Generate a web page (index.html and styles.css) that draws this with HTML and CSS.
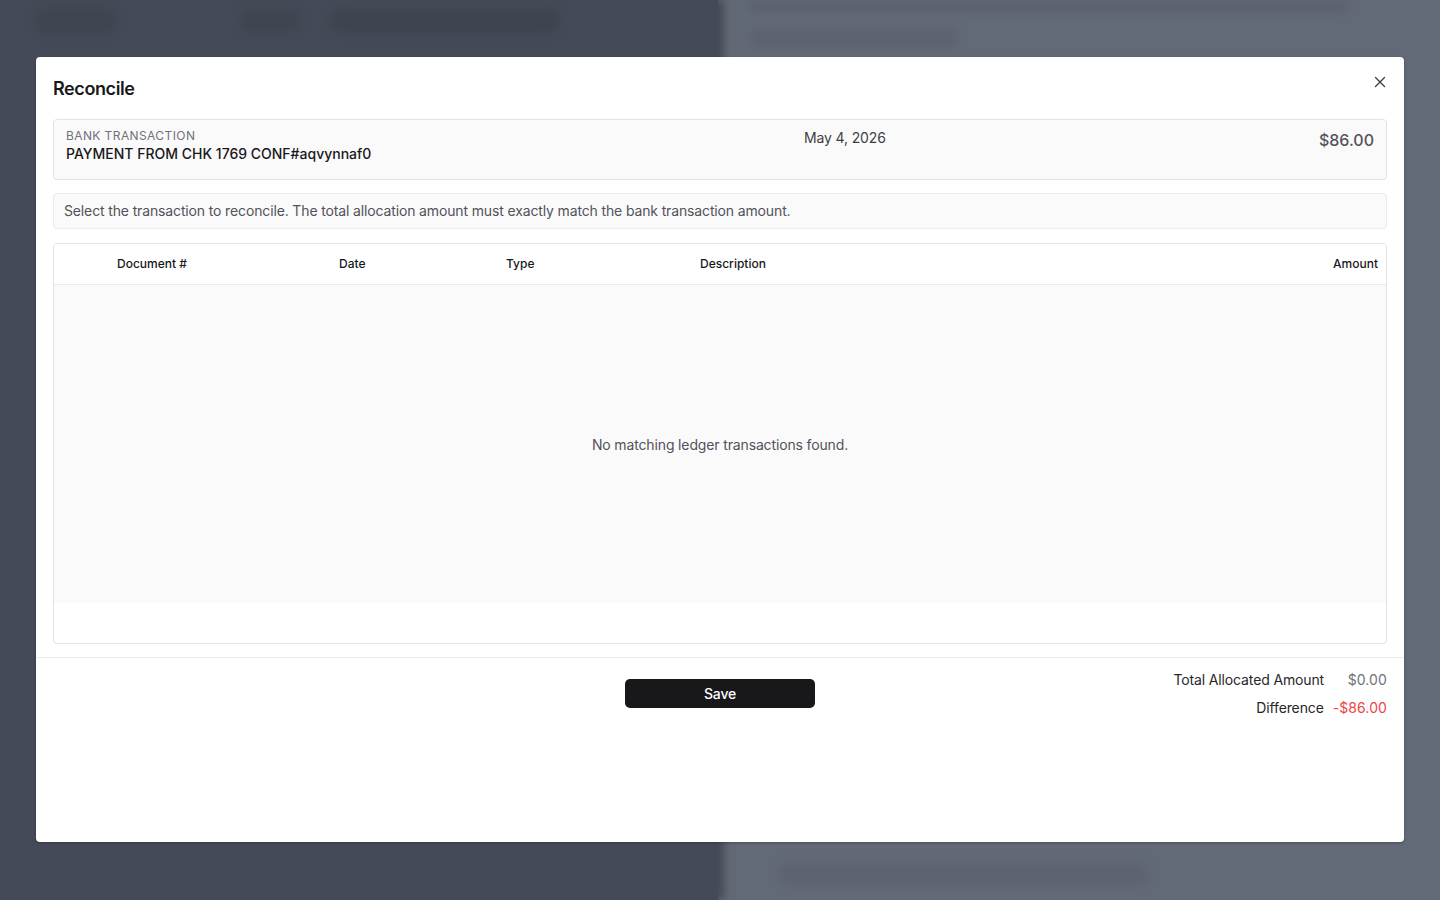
FILE: index.html
```html
<!DOCTYPE html>
<html lang="en">
<head>
    <meta charset="UTF-8">
    <meta name="viewport" content="width=device-width, initial-scale=1.0">
    <title>Reconcile</title>
    <link rel="stylesheet" href="styles.css">
</head>
<body>
    <div class="backdrop">
        <div class="page-left">
            <span class="blob blob-logo"></span>
            <span class="blob blob-nav1"></span>
            <span class="blob blob-nav2"></span>
        </div>
        <div class="page-right">
            <span class="blob blob-r1"></span>
            <span class="blob blob-r2"></span>
            <span class="blob blob-r3"></span>
        </div>
    </div>

    <div class="modal">
        <div class="modal-header">
            <h2 class="modal-title">Reconcile</h2>
            <button class="close-button" aria-label="Close">
                <svg width="12" height="12" viewBox="0 0 12 12" fill="none" stroke="#3f3f46" stroke-width="1.4" stroke-linecap="round">
                    <line x1="1.5" y1="1.5" x2="10.5" y2="10.5"/>
                    <line x1="10.5" y1="1.5" x2="1.5" y2="10.5"/>
                </svg>
            </button>
        </div>

        <div class="modal-body">
            <div class="bank-box">
                <div class="bank-main">
                    <div class="bank-label">BANK TRANSACTION</div>
                    <div class="bank-name">PAYMENT FROM CHK 1769 CONF#aqvynnaf0</div>
                </div>
                <div class="bank-date">May 4, 2026</div>
                <div class="bank-amount">$86.00</div>
            </div>

            <div class="info-box">
                Select the transaction to reconcile. The total allocation amount must exactly match the bank transaction amount.
            </div>

            <div class="ledger-table">
                <div class="table-head">
                    <div></div>
                    <div class="th">Document #</div>
                    <div class="th">Date</div>
                    <div class="th">Type</div>
                    <div class="th">Description</div>
                    <div class="th th-right">Amount</div>
                </div>
                <div class="table-empty">No matching ledger transactions found.</div>
                <div class="table-foot"></div>
            </div>
        </div>

        <div class="modal-footer">
            <div></div>
            <button class="save-button">Save</button>
            <div class="totals">
                <div class="total-row">
                    <span class="total-label">Total Allocated Amount</span>
                    <span class="total-value">$0.00</span>
                </div>
                <div class="total-row">
                    <span class="total-label">Difference</span>
                    <span class="total-value negative">-$86.00</span>
                </div>
            </div>
        </div>
    </div>
</body>
</html>
```

FILE: styles.css
```css
* {
    box-sizing: border-box;
}
body {
    margin: 0;
    width: 1440px;
    height: 900px;
    overflow: hidden;
    font-family: Inter, "Noto Sans", Arial, sans-serif;
    color: #18181b;
    position: relative;
}

/* Dimmed page behind the dialog */
.backdrop {
    display: flex;
    height: 100%;
}
.page-left {
    position: relative;
    width: 718px;
    background-color: #444a57;
    box-shadow: 6px 0 8px rgba(40, 44, 54, 0.5);
    z-index: 1;
}
.page-right {
    position: relative;
    flex: 1;
    background-color: #636a77;
}
.blob {
    position: absolute;
    border-radius: 12px;
    filter: blur(4px);
}
.blob-logo {
    left: 36px; top: 8px; width: 80px; height: 26px;
    background-color: #3f4551;
}
.blob-nav1 {
    left: 240px; top: 10px; width: 60px; height: 22px;
    background-color: #3f4551;
}
.blob-nav2 {
    left: 330px; top: 9px; width: 230px; height: 24px;
    background-color: #3e4450;
}
.blob-r1 {
    left: 30px; top: 0; width: 600px; height: 12px;
    background-color: #5b616e;
}
.blob-r2 {
    left: 30px; top: 28px; width: 210px; height: 22px;
    background-color: #5d6370;
}
.blob-r3 {
    left: 60px; top: 862px; width: 370px; height: 24px;
    background-color: #5d6370;
}

/* Dialog */
.modal {
    position: absolute;
    left: 36px;
    top: 57px;
    width: 1368px;
    height: 785px;
    background-color: #fff;
    border-radius: 4px;
    box-shadow: 0 1px 3px rgba(0, 0, 0, 0.25);
    z-index: 2;
    display: flex;
    flex-direction: column;
    letter-spacing: -0.14px;
}
.modal-header {
    display: flex;
    justify-content: space-between;
    align-items: flex-start;
    padding: 20px 17px 0 17px;
}
.modal-title {
    margin: 0;
    font-size: 18px;
    line-height: 24px;
    font-weight: 600;
    letter-spacing: -0.4px;
    color: #18181b;
}
.close-button {
    border: none;
    background: none;
    padding: 0;
    width: 16px;
    height: 16px;
    display: flex;
    align-items: center;
    justify-content: center;
    cursor: pointer;
    position: relative;
    top: -3px;
    left: 1px;
}

.modal-body {
    padding: 18px 17px 13px 17px;
    display: flex;
    flex-direction: column;
    gap: 13px;
}

.bank-box {
    display: grid;
    grid-template-columns: 738px 1fr auto;
    padding: 8px 12px 15px 12px;
    background-color: #fafafa;
    border: 1px solid #e4e4e7;
    border-radius: 4px;
}
.bank-label {
    font-size: 12px;
    line-height: 16px;
    letter-spacing: 0.4px;
    color: #71717a;
}
.bank-name {
    font-size: 14px;
    line-height: 20px;
    font-weight: 500;
    letter-spacing: 0;
    color: #18181b;
}
.bank-date {
    font-size: 14px;
    line-height: 20px;
    color: #3f3f46;
}
.bank-amount {
    font-size: 16px;
    line-height: 24px;
    color: #52525b;
    font-weight: 500;
    letter-spacing: 0;
}

.info-box {
    padding: 7px 10px 7px 10px;
    font-size: 14px;
    line-height: 20px;
    color: #52525b;
    background-color: #fafafa;
    border: 1px solid #ececee;
    border-radius: 4px;
}

.ledger-table {
    margin-top: 1px;
    border: 1px solid #e4e4e7;
    border-radius: 4px;
    overflow: hidden;
}
.table-head {
    display: grid;
    grid-template-columns: 51px 222px 167px 194px 1fr auto;
    align-items: center;
    height: 41px;
    padding-right: 8px;
    border-bottom: 1px solid #ececee;
    background-color: #fff;
    letter-spacing: 0;
}
.th {
    padding-left: 12px;
    font-size: 12px;
    line-height: 16px;
    font-weight: 500;
    color: #18181b;
}
.th-right {
    text-align: right;
}
.table-empty {
    height: 318px;
    display: flex;
    align-items: center;
    justify-content: center;
    background-color: #fafafa;
    font-size: 14px;
    color: #52525b;
}
.table-foot {
    height: 40px;
}

.modal-footer {
    display: grid;
    grid-template-columns: 1fr 190px 1fr;
    align-items: center;
    padding: 12px 17px 0 17px;
    border-top: 1px solid #ececee;
}
.save-button {
    height: 29px;
    border: none;
    border-radius: 5px;
    background-color: #18181b;
    color: #fff;
    font-family: inherit;
    font-size: 14px;
    font-weight: 500;
    letter-spacing: -0.14px;
    cursor: pointer;
    margin-top: -2px;
}
.totals {
    display: flex;
    flex-direction: column;
    align-items: flex-end;
    gap: 8px;
}
.total-row {
    display: flex;
    gap: 9px;
    font-size: 14px;
    line-height: 20px;
}
.total-label {
    color: #27272a;
}
.total-value {
    min-width: 54px;
    text-align: right;
    color: #71717a;
    letter-spacing: 0.1px;
}
.negative {
    color: #ef4444;
}
```
